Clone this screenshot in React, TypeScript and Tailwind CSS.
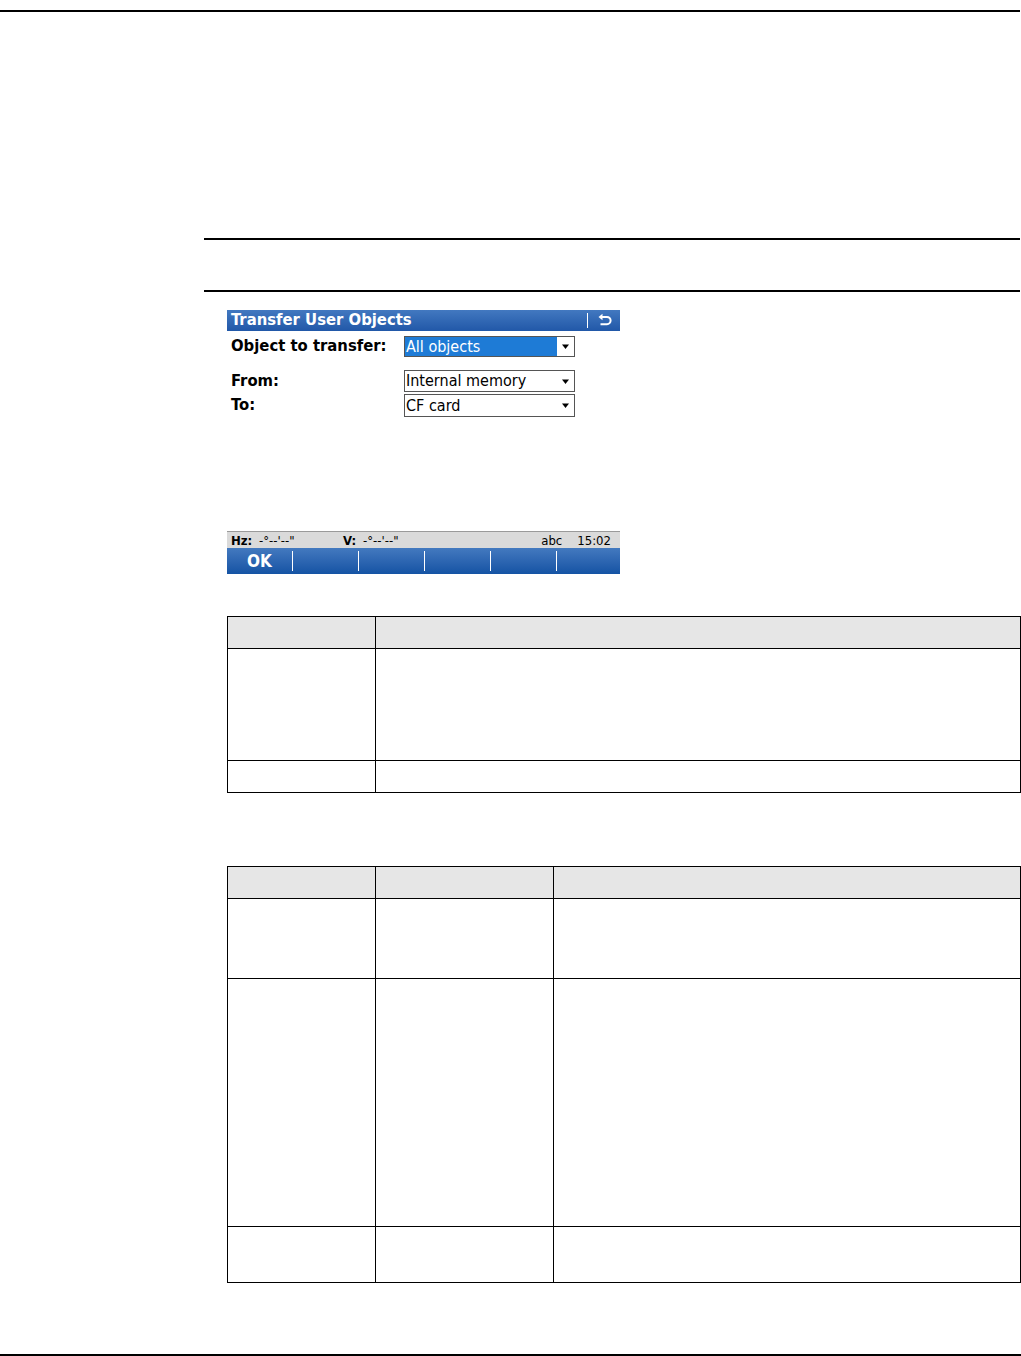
import React from "react";

const UI_FONT = "font-['DejaVu_Sans_Condensed','DejaVu_Sans',sans-serif]";

function Arrow() {
  return (
    <svg width="9" height="7" viewBox="0 0 9 7" className="shrink-0">
      <path d="M1 1.5 H8 L4.5 6 Z" fill="#000" />
    </svg>
  );
}

function Dropdown({ text, selected }: { text: string; selected?: boolean }) {
  return (
    <div className="w-[171px] h-full border border-[#555] flex items-stretch bg-white">
      <div
        className={
          selected
            ? "flex-1 bg-[#1e7bd6] text-white flex items-center pl-[1px] text-[16px] leading-none"
            : "flex-1 text-black flex items-center pl-[1px] text-[16px] leading-none"
        }
      >
        {text}
      </div>
      <div className="w-[17px] flex items-center justify-center">
        <Arrow />
      </div>
    </div>
  );
}

function ReturnIcon() {
  return (
    <svg width="16" height="15" viewBox="0 0 16 15">
      <path
        d="M4 4 H10 A3.6 3.6 0 0 1 10 11.2 H3.5"
        stroke="#fff"
        strokeWidth="2"
        fill="none"
      />
      <path d="M1.5 4 L5.5 0.8 L5.5 7.2 Z" fill="#fff" />
    </svg>
  );
}

function Dialog() {
  return (
    <div className={`ml-[227px] w-[393px] ${UI_FONT}`}>
      <div className="h-[21px] bg-gradient-to-b from-[#4278c0] to-[#2158a8] flex items-center text-white">
        <span className="pl-[4px] font-bold text-[16.5px] leading-none flex-1">
          Transfer User Objects
        </span>
        <div className="w-[1px] h-[15px] bg-white mr-[9px]" />
        <div className="mr-[7px] flex items-center">
          <ReturnIcon />
        </div>
      </div>
      <div className="h-[200px] flex flex-col">
        <div className="mt-[5px] h-[21px] flex items-center">
          <div className="w-[177px] pl-[4px] font-bold text-[16.5px] text-black leading-none">
            Object to transfer:
          </div>
          <Dropdown text="All objects" selected />
        </div>
        <div className="mt-[13px] h-[22px] flex items-center">
          <div className="w-[177px] pl-[4px] font-bold text-[16.5px] text-black leading-none">
            From:
          </div>
          <Dropdown text="Internal memory" />
        </div>
        <div className="mt-[2px] h-[23px] flex items-center">
          <div className="w-[177px] pl-[4px] font-bold text-[16.5px] text-black leading-none">
            To:
          </div>
          <Dropdown text="CF card" />
        </div>
      </div>
      <div className="h-[17px] bg-[#dadada] border-t border-[#9a9a9a] flex items-center text-[13px] leading-none text-black pl-[4px]">
        <span className="font-bold w-[28px]">Hz:</span>
        <span className="w-[84px]">-°--'--"</span>
        <span className="font-bold w-[20px]">V:</span>
        <span>-°--'--"</span>
        <span className="flex-1" />
        <span className="mr-[15px]">abc</span>
        <span className="mr-[9px]">15:02</span>
      </div>
      <div className="h-[26px] bg-gradient-to-b from-[#4379bf] to-[#1453a4] flex items-center text-white">
        <div className="w-[65px] flex justify-center font-bold text-[17px] leading-none">OK</div>
        <div className="w-[1px] h-[20px] bg-white" />
        <div className="w-[65px]" />
        <div className="w-[1px] h-[20px] bg-white" />
        <div className="w-[65px]" />
        <div className="w-[1px] h-[20px] bg-white" />
        <div className="w-[65px]" />
        <div className="w-[1px] h-[20px] bg-white" />
        <div className="w-[65px]" />
        <div className="w-[1px] h-[20px] bg-white" />
        <div className="flex-1" />
      </div>
    </div>
  );
}

function Table1() {
  return (
    <div className="ml-[227px] w-[794px] border-t border-l border-black grid grid-cols-[148px_1fr]">
      <div className="h-[32px] bg-[#e6e6e6] border-r border-b border-black" />
      <div className="h-[32px] bg-[#e6e6e6] border-r border-b border-black" />
      <div className="h-[112px] border-r border-b border-black" />
      <div className="h-[112px] border-r border-b border-black" />
      <div className="h-[32px] border-r border-b border-black" />
      <div className="h-[32px] border-r border-b border-black" />
    </div>
  );
}

function Table2() {
  const rows = [80, 248, 56];
  return (
    <div className="ml-[227px] w-[794px] border-t border-l border-black grid grid-cols-[148px_178px_1fr]">
      <div className="h-[32px] bg-[#e6e6e6] border-r border-b border-black" />
      <div className="h-[32px] bg-[#e6e6e6] border-r border-b border-black" />
      <div className="h-[32px] bg-[#e6e6e6] border-r border-b border-black" />
      {rows.map((h, i) => (
        <React.Fragment key={i}>
          <div className="border-r border-b border-black" style={{ height: h }} />
          <div className="border-r border-b border-black" style={{ height: h }} />
          <div className="border-r border-b border-black" style={{ height: h }} />
        </React.Fragment>
      ))}
    </div>
  );
}

export default function App() {
  return (
    <div className="w-[1021px] h-[1356px] bg-white flex flex-col overflow-hidden">
      <div className="h-[10px] shrink-0" />
      <div className="h-[2px] w-[1020px] bg-black shrink-0" />
      <div className="h-[226px] shrink-0" />
      <div className="ml-[204px] w-[816px] h-[2px] bg-black shrink-0" />
      <div className="h-[50px] shrink-0" />
      <div className="ml-[204px] w-[816px] h-[2px] bg-black shrink-0" />
      <div className="h-[18px] shrink-0" />
      <Dialog />
      <div className="h-[42px] shrink-0" />
      <Table1 />
      <div className="h-[73px] shrink-0" />
      <Table2 />
      <div className="flex-1" />
      <div className="h-[2px] w-[1021px] bg-black shrink-0" />
    </div>
  );
}
